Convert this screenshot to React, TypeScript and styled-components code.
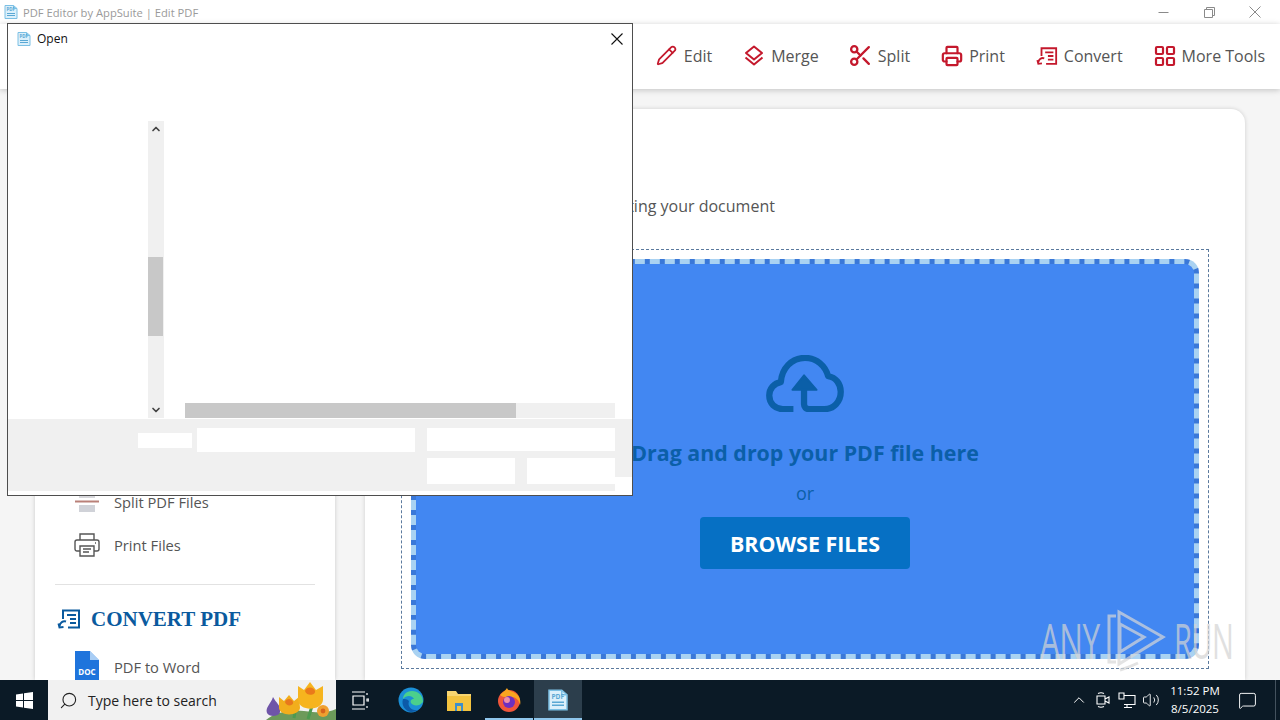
import React from 'react';
import styled, { createGlobalStyle } from 'styled-components';
import {
  ChevronDown,
  ChevronUp,
  LayoutGrid,
  MessageSquare,
  Pencil,
  Printer,
  Scissors,
  Search,
  Volume2,
} from 'lucide-react';

const GlobalStyle = createGlobalStyle`
  html, body {
    margin: 0;
    padding: 0;
    overflow: hidden;
  }

  body {
    font-family: 'Open Sans', 'Liberation Sans', sans-serif;
  }
`;

const COLORS = {
  red: '#c4182c',
  navy: '#0a5a9e',
  blue: '#4287f2',
  dark: '#0b5fa8',
  text: '#555555',
};

const FileGlyph = ({ size = 16 }: { size?: number }) => (
  <svg width={size} height={size} viewBox="0 0 16 16" fill="none">
    <path d="M2 1.5h8.5l3.5 3v10H2z" fill="#dcf0fb" stroke="#7cc0e4" />
    <path d="M10.5 1.5v3h3.5" stroke="#7cc0e4" />
    <text x="3.6" y="7.4" fontSize="4.4" fontWeight="700" fill="#5aa8d4">
      PDF
    </text>
    <path d="M4 9.5h8M4 11.5h8" stroke="#5aa8d4" />
  </svg>
);

const ConvertGlyph = ({ size = 22, color }: { size?: number; color: string }) => (
  <svg width={size} height={size} viewBox="0 0 24 24" fill="none" stroke={color} strokeWidth="2">
    <path d="M6 12V3.5h16v17H11" />
    <path d="M10 8h9M13 12h6M13 16h6" />
    <path d="M9 14.5c-3-1-6 1-6.5 4.5" />
    <path d="M1.5 16.5 2.5 20.5 6.5 20" />
  </svg>
);

const MergeGlyph = () => (
  <svg width="20" height="21" viewBox="0 0 20 21" fill="none" stroke={COLORS.red} strokeWidth="2" strokeLinejoin="round">
    <path d="M10 1.5 18 8l-8 6.5L2 8z" />
    <path d="M1.5 12.5 10 19.5l8.5-7" />
  </svg>
);

const NAV_ITEMS = [
  { label: 'Edit', icon: <Pencil size={21} color={COLORS.red} strokeWidth={2} /> },
  { label: 'Merge', icon: <MergeGlyph /> },
  { label: 'Split', icon: <Scissors size={25} color={COLORS.red} strokeWidth={2.2} /> },
  { label: 'Print', icon: <Printer size={22} color={COLORS.red} strokeWidth={2.4} /> },
  { label: 'Convert', icon: <ConvertGlyph color={COLORS.red} /> },
  { label: 'More Tools', icon: <LayoutGrid size={24} color={COLORS.red} strokeWidth={2.2} /> },
];

const App = () => (
  <>
    <GlobalStyle />
    <Desktop>
      <AppWindow>
        <TitleBar>
          <TitleText>
            <FileGlyph />
            PDF Editor by AppSuite | Edit PDF
          </TitleText>
          <WindowButtons>
            <WindowButton>
              <svg width="11" height="11" viewBox="0 0 11 11" stroke="#8a8a8a">
                <path d="M0.5 5.5h10" />
              </svg>
            </WindowButton>
            <WindowButton>
              <svg width="11" height="11" viewBox="0 0 11 11" fill="none" stroke="#8a8a8a">
                <path d="M0.5 2.5h8v8h-8z" />
                <path d="M2.5 2.5v-2h8v8h-2" />
              </svg>
            </WindowButton>
            <WindowButton>
              <svg width="12" height="12" viewBox="0 0 12 12" stroke="#8a8a8a">
                <path d="M0.5 0.5l11 11M11.5 0.5l-11 11" />
              </svg>
            </WindowButton>
          </WindowButtons>
        </TitleBar>
        <NavBar>
          {NAV_ITEMS.map(item => (
            <NavItem key={item.label}>
              <NavIcon>{item.icon}</NavIcon>
              {item.label}
            </NavItem>
          ))}
        </NavBar>
        <Main>
          <Sidebar>
            <SideRow>
              <SideIcon>
                <svg width="26" height="26" viewBox="0 0 26 26" fill="none">
                  <path d="M5 3h16v6H5z" fill="#d8d8dc" />
                  <path d="M1 12.5h24" stroke="#b98078" strokeWidth="2" />
                  <path d="M5 16h16v7H5z" fill="#d0d2d8" />
                </svg>
              </SideIcon>
              Split PDF Files
            </SideRow>
            <SideRow>
              <SideIcon>
                <svg width="26" height="26" viewBox="0 0 26 26" fill="none" stroke="#555" strokeWidth="1.4">
                  <path d="M6 8V2h14v6" />
                  <path d="M6 19H3a2 2 0 0 1-2-2v-7a2 2 0 0 1 2-2h20a2 2 0 0 1 2 2v7a2 2 0 0 1-2 2h-3" />
                  <path d="M6 14h14v10H6z" />
                  <path d="M9 17h8M9 20h6M21 11h1" />
                </svg>
              </SideIcon>
              Print Files
            </SideRow>
            <SideDivider />
            <SideHeading>
              <ConvertGlyph size={24} color={COLORS.navy} />
              CONVERT PDF
            </SideHeading>
            <SideRow>
              <SideIcon>
                <svg width="26" height="32" viewBox="0 0 26 32">
                  <path d="M1 0h15l9 9v23H1z" fill="#1f74dc" />
                  <path d="M16 0v9h9z" fill="#ffffff" />
                  <path d="M16 0l9 9h-9z" fill="#a8cdf5" />
                  <text x="13" y="24" fontSize="8" fontWeight="700" textAnchor="middle" fill="#ffffff">
                    DOC
                  </text>
                </svg>
              </SideIcon>
              PDF to Word
            </SideRow>
          </Sidebar>
          <Card>
            <CardTitle>Edit PDF</CardTitle>
            <CardIntro>Upload your PDFs to begin editing your document</CardIntro>
            <DropOutline>
              <DropZone>
                <svg width="78" height="57" viewBox="0 0 80 59" fill="none" stroke={COLORS.dark} strokeWidth="6.5" strokeLinejoin="round">
                  <path d="M28 56H17C9 56 3 50 3 42c0-7 5-13 12-14 1-14 11-25 25-25 12 0 21 8 24 19 8 1 13 8 13 16 0 10-7 18-17 18H44c-3 0-5-2-5-5V30" />
                  <path d="M27 36l12-15 13 15z" fill={COLORS.dark} strokeWidth="2" />
                </svg>
                <DropTitle>Drag and drop your PDF file here</DropTitle>
                <DropOr>or</DropOr>
                <BrowseButton>BROWSE FILES</BrowseButton>
              </DropZone>
            </DropOutline>
          </Card>
        </Main>
      </AppWindow>

      <Taskbar>
        <StartButton>
          <svg width="17" height="17" viewBox="0 0 17 17" fill="#ffffff">
            <path d="M0 2.4 7 1.4V8H0zM8 1.3 17 0v8H8zM0 9h7v6.6l-7-1zM8 9h9v8l-9-1.3z" />
          </svg>
        </StartButton>
        <SearchBox>
          <SearchGlyph size={19} color="#222" strokeWidth={1.4} />
          <SearchLabel>Type here to search</SearchLabel>
          <SearchArt>
            <svg width="76" height="40" viewBox="0 0 76 40">
              <path d="M6 40c8-7 24-11 38-9s24 2 32-2v11z" fill="#6d9a5a" />
              <path d="M13 17c3 6 8 8 7 15-1 5-11 5-13 1-2-6 4-9 6-16z" fill="#6f55a8" />
              <path d="M36 26l-2 12M52 26l-4 13" stroke="#4d9a50" strokeWidth="3" fill="none" />
              <path d="M19 17l5 4 5-6 5 6 5-4 1 11c-1 8-20 9-21 0z" fill="#f2ae1c" />
              <path d="M25 22c1-4 7-4 8 0s-7 5-8 0z" fill="#e8781c" />
              <path d="M38 6l6 4 6-8 6 8 7-4 0 14c-1 11-24 12-25 0z" fill="#f6b41e" />
              <path d="M45 11c2-5 9-4 10 0s-8 6-10 0z" fill="#ea7a1a" />
              <circle cx="63" cy="31" r="6" fill="#f0a030" />
              <circle cx="63" cy="31" r="2.4" fill="#d8641c" />
            </svg>
          </SearchArt>
        </SearchBox>
        <TaskIcon>
          <svg width="17" height="19" viewBox="0 0 17 19" fill="none" stroke="#ffffff" strokeWidth="1.2">
            <path d="M0 1h13M0 18h13M1 5h11v9H1z" />
            <path d="M15 2v2M15 8h2v2h-2zM15 15v2" />
          </svg>
        </TaskIcon>
        <TaskIcon $offset={3}>
          <svg width="26" height="26" viewBox="0 0 26 26">
            <circle cx="13" cy="13" r="12.5" fill="#1b8fd6" />
            <path d="M25 15c0-7-5-11-11-11-6 0-9 4-9 8 3-4 9-4 11 0-3 0-4 2-3 4 2 3 8 4 12-1z" fill="#4bd08c" />
            <path d="M5 12c-2 6 2 12 8 13 3 0 5-1 7-2-6 1-11-3-9-9-2-2-4-2-6-2z" fill="#0c5aa8" />
          </svg>
        </TaskIcon>
        <TaskIcon>
          <svg width="24" height="22" viewBox="0 0 24 22">
            <path d="M0 2h9l2 3h13v17H0z" fill="#f7d570" />
            <path d="M0 7h24v15H0z" fill="#f3c33f" />
            <path d="M8 14h8v8H8z" fill="#3d8fcc" />
            <path d="M10 17h4v5h-4z" fill="#f3c33f" />
          </svg>
        </TaskIcon>
        <TaskIcon $open $offset={2}>
          <svg width="26" height="26" viewBox="0 0 26 26">
            <circle cx="13" cy="14" r="11" fill="#f0563a" />
            <path d="M4 8c3-3 5-4 7-7 1 3 5 3 8 5 5 3 6 8 5 12-1-5-4-8-9-8-4 0-8 1-11-2z" fill="#f9a51f" />
            <circle cx="13" cy="15" r="6" fill="#6d2fc0" />
            <circle cx="11" cy="13" r="3" fill="#f08ea8" />
          </svg>
        </TaskIcon>
        <TaskIcon $open $active $offset={1}>
          <FileGlyph size={24} />
        </TaskIcon>
        <Tray>
          <TrayIcon>
            <ChevronUp size={18} color="#fff" strokeWidth={1.3} />
          </TrayIcon>
          <TrayIcon>
            <svg width="18" height="18" viewBox="0 0 18 18" fill="none" stroke="#ffffff" strokeWidth="1.1">
              <path d="M3 5h8v8H3zM11 8l4-2v6l-4-2" />
              <path d="M4 2.5c2-1 4-1 6 0M4 15.5c2 1 4 1 6 0" />
            </svg>
          </TrayIcon>
          <TrayIcon>
            <svg width="18" height="18" viewBox="0 0 18 18" fill="none" stroke="#ffffff" strokeWidth="1.1">
              <path d="M4 4.5h13v9H6M9 13.5v3M6 16.5h8" />
              <path d="M1 2h5v6H1z" fill="#0b1a26" />
            </svg>
          </TrayIcon>
          <TrayIcon>
            <Volume2 size={18} color="#fff" strokeWidth={1.2} />
          </TrayIcon>
          <Clock>
            <span>11:52 PM</span>
            <span>8/5/2025</span>
          </Clock>
          <NotifyButton>
            <MessageSquare size={19} color="#fff" strokeWidth={1.2} />
          </NotifyButton>
          <ShowDesktop />
        </Tray>
      </Taskbar>

      <Dialog>
        <DialogTitle>
          <FileGlyph />
          <DialogTitleText>Open</DialogTitleText>
          <DialogClose>
            <svg width="12" height="12" viewBox="0 0 12 12" stroke="#111111" strokeWidth="1.1">
              <path d="M0.5 0.5l11 11M11.5 0.5l-11 11" />
            </svg>
          </DialogClose>
        </DialogTitle>
        <DialogBody>
          <VScrollbar>
            <ChevronUp size={12} color="#444" strokeWidth={3.4} />
            <VTrack>
              <VThumb />
            </VTrack>
            <ChevronDown size={12} color="#444" strokeWidth={3.4} />
          </VScrollbar>
          <HScrollbar>
            <HThumb />
          </HScrollbar>
        </DialogBody>
        <DialogFooter>
          <NameLabel />
          <NameInput />
          <FilterInput />
          <FooterButtons>
            <FooterButton />
            <FooterButton />
          </FooterButtons>
        </DialogFooter>
      </Dialog>

      <Watermark>
        <WatermarkText $scale={0.63}>ANY</WatermarkText>
        <WatermarkIcon>
          <svg width="64" height="64" viewBox="0 0 64 64" fill="none" stroke="#d8d8d8" strokeWidth="3">
            <path d="M10 8H3v46h7" />
            <path d="M13 4v52l44-27z" />
            <path d="M14 16v28l24-15z" />
            <path d="M14 62c6-2 12-4 18-7" />
          </svg>
        </WatermarkIcon>
        <WatermarkText $scale={0.58}>RUN</WatermarkText>
      </Watermark>
    </Desktop>
  </>
);

const Desktop = styled.div`
  display: flex;
  flex-direction: column;
  height: 720px;
  overflow: hidden;
  position: relative;
  width: 1280px;
`;

const AppWindow = styled.div`
  background: #f5f5f5;
  display: flex;
  flex: 1;
  flex-direction: column;
  min-height: 0;
`;

const TitleBar = styled.div`
  align-items: center;
  background: #ffffff;
  display: flex;
  flex-shrink: 0;
  height: 24px;
  justify-content: space-between;
`;

const TitleText = styled.div`
  align-items: center;
  color: #9a9a9a;
  display: flex;
  font-size: 11.2px;
  gap: 4px;
  padding-left: 3px;
`;

const WindowButtons = styled.div`
  display: flex;
  padding-right: 2px;
`;

const WindowButton = styled.div`
  align-items: center;
  display: flex;
  height: 22px;
  justify-content: center;
  width: 46px;
`;

const NavBar = styled.nav`
  align-items: center;
  background: #ffffff;
  box-shadow: 0 1px 6px rgba(0, 0, 0, 0.22);
  box-sizing: border-box;
  display: flex;
  flex-shrink: 0;
  gap: 32px;
  height: 65px;
  justify-content: flex-end;
  padding: 0 15px 2px 0;
  position: relative;
`;

const NavItem = styled.div`
  align-items: center;
  color: ${COLORS.text};
  display: flex;
  font-size: 16px;
  gap: 7px;
`;

const NavIcon = styled.span`
  align-items: center;
  display: flex;
  justify-content: center;
  width: 20px;

  svg {
    flex-shrink: 0;
  }
`;

const Main = styled.main`
  display: flex;
  flex: 1;
  gap: 30px;
  min-height: 0;
  padding: 20px 35px 0;
`;

const Sidebar = styled.aside`
  background: #ffffff;
  box-shadow: 0 0 4px rgba(0, 0, 0, 0.18);
  box-sizing: border-box;
  flex-shrink: 0;
  overflow: hidden;
  padding: 371px 20px 0;
  width: 300px;
`;

const SideRow = styled.div`
  align-items: center;
  color: ${COLORS.text};
  display: flex;
  font-size: 14.7px;
  gap: 14px;
  height: 43px;
  padding-left: 19px;
`;

const SideIcon = styled.span`
  align-items: center;
  display: flex;
  justify-content: center;
  width: 26px;
`;

const SideDivider = styled.hr`
  border: 0;
  border-top: 1px solid #e2e2e2;
  margin: 18px 0 0;
`;

const SideHeading = styled.h3`
  align-items: center;
  color: ${COLORS.navy};
  display: flex;
  font-family: 'Liberation Serif', serif;
  font-size: 21px;
  font-weight: 700;
  gap: 10px;
  height: 26px;
  margin: 21px 0 13px;
  padding-left: 2px;
`;

const Card = styled.section`
  background: #ffffff;
  border-radius: 14px 14px 0 0;
  box-shadow: 0 0 4px rgba(0, 0, 0, 0.16);
  box-sizing: border-box;
  display: flex;
  flex: 1;
  flex-direction: column;
  padding: 0 36px;
`;

const CardTitle = styled.h1`
  color: ${COLORS.navy};
  font-size: 28px;
  line-height: 38px;
  margin: 30px 0 0;
`;

const CardIntro = styled.p`
  color: ${COLORS.text};
  font-size: 16px;
  line-height: 22px;
  margin: 18px 0 32px 2px;
`;

const DropOutline = styled.div`
  border: 1px dashed #5b7a9e;
  box-sizing: border-box;
  height: 420px;
  padding: 9px;
`;

const DropZone = styled.div`
  align-items: center;
  background:
    linear-gradient(${COLORS.blue}, ${COLORS.blue}) padding-box,
    linear-gradient(#3a78d8, #3a78d8) border-box;
  border: 5px dashed #a9d2f2;
  border-radius: 14px;
  box-sizing: border-box;
  display: flex;
  flex-direction: column;
  height: 100%;
  padding-top: 91px;
`;

const DropTitle = styled.div`
  color: ${COLORS.dark};
  font-size: 21.4px;
  font-weight: 700;
  line-height: 30px;
  margin-top: 26px;
`;

const DropOr = styled.div`
  color: ${COLORS.dark};
  font-size: 18px;
  line-height: 24px;
  margin-top: 13px;
`;

const BrowseButton = styled.div`
  align-items: center;
  background: #0670c4;
  border-radius: 4px;
  color: #ffffff;
  display: flex;
  font-size: 21.4px;
  font-weight: 700;
  height: 52px;
  justify-content: center;
  margin-top: 12px;
  width: 210px;
`;

const Taskbar = styled.footer`
  align-items: stretch;
  background: #0b1a26;
  display: flex;
  flex-shrink: 0;
  height: 40px;
`;

const StartButton = styled.div`
  align-items: center;
  display: flex;
  justify-content: center;
  width: 48px;
`;

const SearchBox = styled.div`
  align-items: center;
  background: #f1f1f1;
  box-sizing: border-box;
  display: flex;
  gap: 10px;
  overflow: hidden;
  padding-left: 11px;
  position: relative;
  width: 288px;
`;

const SearchGlyph = styled(Search)`
  transform: scaleX(-1);
`;

const SearchLabel = styled.span`
  color: #222222;
  font-size: 14px;
`;

const SearchArt = styled.span`
  bottom: 0;
  display: flex;
  height: 40px;
  position: absolute;
  right: 0;
`;

const TaskIcon = styled.div<{ $open?: boolean; $active?: boolean; $offset?: number }>`
  align-items: center;
  background: ${({ $active }) => ($active ? '#2c3e4c' : 'transparent')};
  box-shadow: ${({ $open }) => ($open ? 'inset 0 -2px 0 #8fc6ec' : 'none')};
  display: flex;
  justify-content: center;
  margin-left: ${({ $offset }) => $offset || 0}px;
  width: 48px;
`;

const Tray = styled.div`
  align-items: center;
  align-self: stretch;
  display: flex;
  margin-left: auto;
`;

const TrayIcon = styled.span`
  align-items: center;
  display: flex;
  justify-content: center;
  width: 24px;
`;

const Clock = styled.div`
  align-items: center;
  color: #ffffff;
  display: flex;
  flex-direction: column;
  font-size: 11.5px;
  line-height: 18px;
  margin-left: 4px;
  width: 56px;
`;

const NotifyButton = styled.span`
  align-items: center;
  display: flex;
  justify-content: center;
  margin-right: 4px;
  width: 48px;
`;

const ShowDesktop = styled.span`
  align-self: stretch;
  border-left: 1px solid #44525e;
  width: 4px;
`;

const Dialog = styled.div`
  background: #ffffff;
  border: 1px solid #4e4e4e;
  box-sizing: border-box;
  display: flex;
  flex-direction: column;
  height: 473px;
  left: 7px;
  position: absolute;
  top: 23px;
  width: 626px;
`;

const DialogTitle = styled.div`
  align-items: center;
  display: flex;
  flex-shrink: 0;
  height: 29px;
  padding-left: 8px;
`;

const DialogTitleText = styled.span`
  color: #111111;
  font-size: 12px;
  margin-left: 5px;
`;

const DialogClose = styled.span`
  display: flex;
  margin-left: auto;
  margin-right: 9px;
`;

const DialogBody = styled.div`
  display: flex;
  flex: 1;
  min-height: 0;
  padding: 68px 0 1px 140px;
`;

const VScrollbar = styled.div`
  align-items: center;
  background: #f0f0f0;
  display: flex;
  flex-direction: column;
  flex-shrink: 0;
  padding: 2px 0;
  width: 16px;
`;

const VTrack = styled.div`
  flex: 1;
  padding-top: 122px;
  width: 100%;
`;

const VThumb = styled.div`
  background: #c8c8c8;
  height: 79px;
  width: 15px;
`;

const HScrollbar = styled.div`
  align-self: flex-end;
  background: #f0f0f0;
  height: 15px;
  margin-left: 21px;
  width: 430px;
`;

const HThumb = styled.div`
  background: #c8c8c8;
  height: 100%;
  width: 331px;
`;

const DialogFooter = styled.div`
  align-content: start;
  background:
    linear-gradient(#f0f0f0, #f0f0f0) left top / 607px 72px no-repeat,
    linear-gradient(#f0f0f0, #f0f0f0) left top / 100% 58px no-repeat;
  box-sizing: border-box;
  column-gap: 5px;
  display: grid;
  flex-shrink: 0;
  grid-template-columns: 54px 218px 195px;
  height: 76px;
  padding: 9px 0 0 130px;
  row-gap: 6px;
`;

const NameLabel = styled.div`
  align-self: center;
  background: #ffffff;
  height: 15px;
`;

const NameInput = styled.div`
  background: #ffffff;
  height: 24px;
`;

const FilterInput = styled.div`
  background: #ffffff;
  height: 23px;
  margin-left: 7px;
`;

const FooterButtons = styled.div`
  display: flex;
  gap: 12px;
  grid-column: 3;
  margin-left: 7px;
`;

const FooterButton = styled.div`
  background: #ffffff;
  flex: 1;
  height: 26px;
`;

const Watermark = styled.div`
  align-items: center;
  bottom: 48px;
  display: flex;
  left: 1040px;
  opacity: 0.7;
  pointer-events: none;
  position: absolute;
`;

const WatermarkText = styled.span<{ $scale: number }>`
  color: #d4d4d4;
  display: inline-block;
  font-size: 50px;
  font-weight: 400;
  letter-spacing: -1px;
  line-height: 56px;
  transform: scaleX(${({ $scale }) => $scale});
  transform-origin: left center;
  white-space: nowrap;
  width: 60px;
`;

const WatermarkIcon = styled.span`
  display: flex;
  margin: 0 4px 0 6px;
`;

export default App;
